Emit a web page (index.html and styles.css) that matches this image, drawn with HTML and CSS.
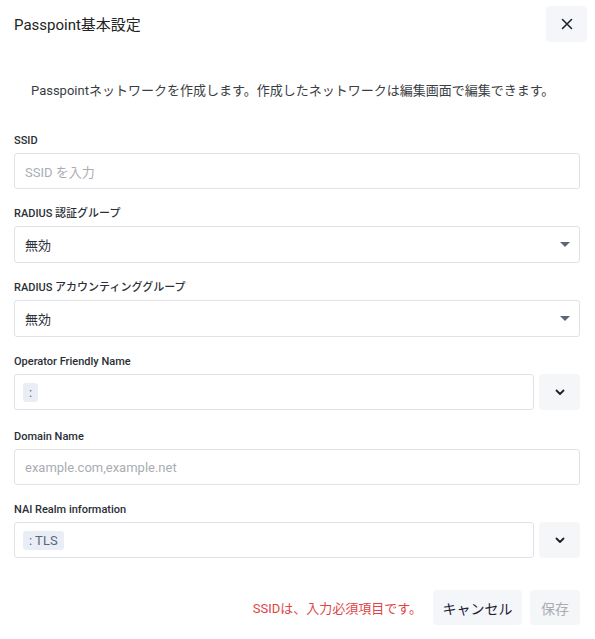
FILE: index.html
```html
<!DOCTYPE html>
<html lang="ja">
<head>
<meta charset="utf-8">
<link rel="stylesheet" href="styles.css">
</head>
<body>
<div class="dialog">
  <div class="header">
    <div class="title">Passpoint基本設定</div>
    <button class="close" aria-label="close">
      <svg width="12" height="12" viewBox="0 0 12 12"><path d="M1.5 1.5 L10.5 10.5 M10.5 1.5 L1.5 10.5" stroke="#1f2433" stroke-width="1.6" stroke-linecap="round" fill="none"/></svg>
    </button>
  </div>
  <p class="desc">Passpointネットワークを作成します。作成したネットワークは編集画面で編集できます。</p>

  <div class="field first">
    <div class="label">SSID</div>
    <div class="input placeholder">SSID を入力</div>
  </div>

  <div class="field">
    <div class="label">RADIUS 認証グループ</div>
    <div class="input select"><span>無効</span><span class="tri"></span></div>
  </div>

  <div class="field">
    <div class="label">RADIUS アカウンティンググループ</div>
    <div class="input select"><span>無効</span><span class="tri"></span></div>
  </div>

  <div class="field">
    <div class="label">Operator Friendly Name</div>
    <div class="row">
      <div class="input grow"><span class="chip">:</span></div>
      <button class="chev">
        <svg width="10" height="7" viewBox="0 0 10 7"><path d="M1.5 1.5 L5 5 L8.5 1.5" stroke="#1a2030" stroke-width="1.8" fill="none" stroke-linecap="round" stroke-linejoin="round"/></svg>
      </button>
    </div>
  </div>

  <div class="field wide">
    <div class="label">Domain Name</div>
    <div class="input placeholder">example.com,example.net</div>
  </div>

  <div class="field">
    <div class="label">NAI Realm information</div>
    <div class="row">
      <div class="input grow"><span class="chip">: TLS</span></div>
      <button class="chev">
        <svg width="10" height="7" viewBox="0 0 10 7"><path d="M1.5 1.5 L5 5 L8.5 1.5" stroke="#1a2030" stroke-width="1.8" fill="none" stroke-linecap="round" stroke-linejoin="round"/></svg>
      </button>
    </div>
  </div>

  <div class="footer">
    <span class="error">SSIDは、入力必須項目です。</span>
    <button class="btn cancel">キャンセル</button>
    <button class="btn save">保存</button>
  </div>
</div>
</body>
</html>
```
FILE: styles.css
```css
* { box-sizing: border-box; }
html, body { margin: 0; padding: 0; background: #fff; }
body {
  font-family: Roboto, "Noto Sans CJK JP", sans-serif;
  color: #2b2f36;
}
.dialog {
  width: 595px;
  padding: 6px 15px 0 14px;
}
.header {
  display: flex;
  align-items: center;
  justify-content: space-between;
  height: 36px;
}
.title {
  font-size: 15px;
  color: #222;
  margin-top: -2px;
}
.close {
  width: 41px;
  height: 36px;
  border: none;
  border-radius: 4px;
  background: #f5f6fa;
  display: flex;
  align-items: center;
  justify-content: center;
  margin-right: -7px;
  padding: 0;
}
.desc {
  margin: 40px 0 0 17px;
  font-size: 13px;
  line-height: 18px;
  color: #3a3d42;
}
.field { margin-top: 18px; }
.field.first { margin-top: 34px; }
.field.wide { margin-top: 20px; }
.label {
  font-size: 11px;
  line-height: 14px;
  font-weight: 500;
  color: #2b2f36;
  margin-bottom: 5px;
}
.input {
  height: 36px;
  border: 1px solid #dfe2e7;
  border-radius: 3px;
  padding: 0 10px;
  display: flex;
  align-items: center;
  font-size: 13px;
  color: #2b2f36;
}
.placeholder { color: #a9adb3; }
.select {
  height: 37px;
  justify-content: space-between;
  padding-right: 9px;
}
.tri {
  width: 0; height: 0;
  border-left: 5px solid transparent;
  border-right: 5px solid transparent;
  border-top: 5px solid #5c6779;
}
.row { display: flex; gap: 5px; }
.grow { flex: 1; padding-left: 8px; }
.chip {
  background: #e9eef6;
  color: #586679;
  font-size: 13px;
  line-height: 19px;
  padding: 0 6px;
  border-radius: 3px;
}
.chev {
  width: 41px;
  height: 36px;
  border: none;
  border-radius: 4px;
  background: #f5f6f7;
  display: flex;
  align-items: center;
  justify-content: center;
  padding: 0;
}
.footer {
  display: flex;
  justify-content: flex-end;
  align-items: center;
  margin-top: 32px;
  gap: 8px;
}
.error {
  color: #e04545;
  font-size: 13px;
  margin-right: 3px;
  white-space: nowrap;
}
.btn {
  height: 35px;
  border: none;
  border-radius: 4px;
  font-family: Roboto, "Noto Sans CJK JP", sans-serif;
  font-size: 14px;
  padding: 0;
  white-space: nowrap;
}
.cancel { background: #f4f6fa; color: #1c2230; width: 89px; }
.save { background: #f5f6f8; color: #a9acb1; width: 50px; }
```
